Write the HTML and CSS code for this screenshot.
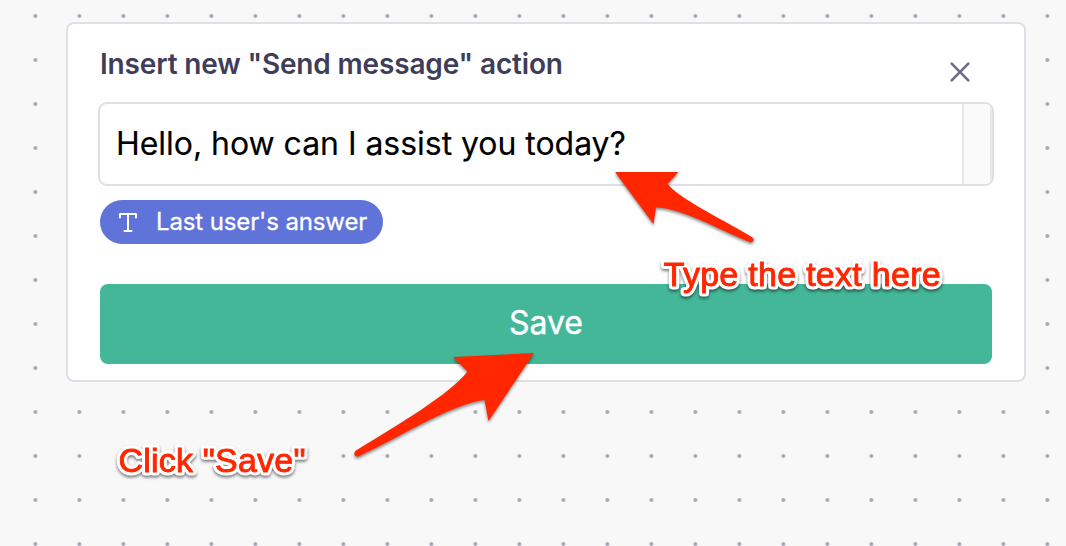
FILE: index.html
```
<!DOCTYPE html>
<html lang="en">
<head>
<meta charset="utf-8">
<title>Send message action</title>
<link rel="stylesheet" href="styles.css">
</head>
<body>
<main class="canvas">
  <section class="card">
    <header class="card-header">
      <h1 class="title">Insert new "Send message" action</h1>
      <button class="close" aria-label="Close">
        <svg width="20" height="20" viewBox="0 0 20 20"><path d="M1.700 1.700l16.600 16.600M18.300 1.700l-16.600 16.600"/></svg>
      </button>
    </header>
    <div class="field">
      <div class="field-text"><span class="message">Hello, how can I assist you today?</span></div>
      <div class="field-rail"></div>
    </div>
    <div class="chip">
      <svg class="chip-icon" width="18" height="19" viewBox="0 0 18 19"><path d="M1 4.500V1h16v3.500M9 1v17M5.500 18h7"/></svg>
      <span class="chip-label">Last user's answer</span>
    </div>
    <button class="save"><span class="save-label">Save</span></button>
  </section>
  <svg class="notes" width="1066" height="546" viewBox="0 0 1066 546">
    <g class="arrow">
      <path d="M615 172H678.500L667.500 184C680 199 715 215 752.500 237.500C755 239.500 753.500 243 749.500 242C715 228 682 208 656 207.500L653.500 224Z"/>
      <path d="M534 353L453 357L467.500 371.500C449 395 399 424 356 450.500C352.500 453.500 355 458 359.500 456C402 436 451 404 484.500 400L488.500 421Z"/>
    </g>
    <g class="note">
      <text class="note-halo" x="663.700" y="286" textLength="277">Type the text here</text>
      <text class="note-ink" x="663.700" y="286" textLength="277">Type the text here</text>
      <text class="note-halo" x="118.500" y="472" textLength="187">Click "Save"</text>
      <text class="note-ink" x="118.500" y="472" textLength="187">Click "Save"</text>
    </g>
  </svg>
</main>
</body>
</html>
```
FILE: styles.css
```
* { box-sizing: border-box; }
body { margin: 0; font-family: Inter, "Liberation Sans", sans-serif; }
button { border: 0; padding: 0; font: inherit; }
.canvas {
  position: relative;
  width: 1066px;
  height: 546px;
  padding: 22px 40px 0 66px;
  overflow: hidden;
  background: #f8f8f8 radial-gradient(circle at 22px 22px, #a8a7b5 1.5px, #a8a7b500 2.3px) 13.4px -6px / 44px 44px;
}
.card {
  height: 360px;
  padding: 22px 31px 0 30px;
  border: 2px solid #e0dfe6;
  border-radius: 8px;
  background: #fff;
  display: flex;
  flex-direction: column;
  align-items: flex-start;
}
.card-header {
  width: 100%;
  height: 56px;
  padding: 0 23px 0 2px;
  display: flex;
  justify-content: space-between;
}
.title { margin: 0; color: #403d58; font-size: 28px; font-weight: 600; letter-spacing: -.16px; line-height: 36px; white-space: nowrap; }
.close { background: none; height: 20px; margin-top: 16px; }
.close svg { display: block; fill: none; stroke: #6f6d85; stroke-width: 2.6; stroke-linecap: round; }
.field {
  width: 896px;
  height: 84px;
  border: 2px solid #e0dfe6;
  border-radius: 9px;
  display: flex;
  overflow: hidden;
}
.field-text { flex: 1; padding: 0 16px; color: #000; font-size: 32px; letter-spacing: -.04px; line-height: 80px; white-space: nowrap; -webkit-text-stroke: .15px; }
.field-rail { width: 30px; background: #fafafa; border: solid #e8e8e8; border-width: 0 2px; }
.chip {
  height: 44px;
  width: 283px;
  margin: 14px 0 0 2px;
  padding-left: 19px;
  border-radius: 22px;
  background: #5f73d9;
  color: #fff;
  display: flex;
  align-items: center;
  gap: 19px;
}
.chip-icon { fill: none; stroke: #fff; stroke-width: 2; stroke-linecap: round; stroke-linejoin: round; }
.chip-label { font-size: 24px; letter-spacing: -.12px; line-height: 44px; white-space: nowrap; -webkit-text-stroke: .3px; }
.save {
  width: 892px;
  height: 80px;
  margin: 40px 0 0 2px;
  padding-bottom: 3px;
  border-radius: 8px;
  background: #44b799;
  color: #fff;
  font-size: 32px;
  line-height: 76px;
  -webkit-text-stroke: .4px;
}
.notes { position: absolute; inset: 0; }
.arrow { fill: #ff2600; filter: drop-shadow(0 2px 1.5px rgba(0, 0, 0, .45)); }
.note { font: 34px "Liberation Sans", Arial, sans-serif; filter: drop-shadow(0 2px 1.5px rgba(0, 0, 0, .5)); }
.note-halo { fill: #fff; stroke: #fff; stroke-width: 7px; stroke-linejoin: round; }
.note-ink { fill: #ff2600; stroke: #ff2600; stroke-width: .9px; }
```
